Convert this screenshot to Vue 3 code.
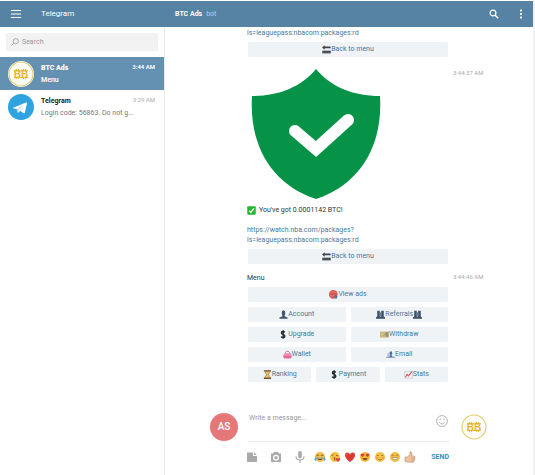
<script setup>
import { ref } from 'vue'

const query = ref('')
const draft = ref('')
const rewardLink = 'https://watch.nba.com/packages?ls=leaguepass:nbacom:packages:rd'

const menuRows = [
  [{ label: 'View ads', before: 'globe' }],
  [{ label: 'Account', before: 'person' }, { label: 'Referrals', before: 'people', after: 'people' }],
  [{ label: 'Upgrade', before: 'dollar' }, { label: 'Withdraw', before: 'cash' }],
  [{ label: 'Wallet', before: 'purse' }, { label: 'Email', before: 'mail' }],
  [
    { label: 'Ranking', before: 'hourglass' },
    { label: 'Payment', before: 'dollar' },
    { label: 'Stats', before: 'chart' }
  ]
]

const attachments = [
  { id: 'file', label: 'Attach file' },
  { id: 'camera', label: 'Send photo' },
  { id: 'mic', label: 'Record voice' }
]

const reactions = [
  { id: 'joy', label: 'Tears of joy' },
  { id: 'kiss', label: 'Kiss' },
  { id: 'heart', label: 'Heart' },
  { id: 'hearteyes', label: 'Heart eyes' },
  { id: 'blush', label: 'Blush' },
  { id: 'grin', label: 'Grin' },
  { id: 'thumb', label: 'Thumbs up' }
]
</script>

<template>
  <div class="app">
    <svg class="sprite" aria-hidden="true">
      <symbol id="coin" viewBox="0 0 26 26">
        <circle cx="13" cy="13" r="13" fill="#fff" />
        <circle cx="13" cy="13" r="12" fill="#fffefa" stroke="#e3cb6a" stroke-width="1.1" />
        <path d="M8.300 8v1.500M10.500 8v1.500M15.500 8v1.500M17.700 8v1.500M8.300 16.500v1.600M10.500 16.500v1.600M15.500 16.500v1.600M17.700 16.500v1.600M6 9.800h14M6 16.400h14" stroke="#e5b632" stroke-width="1" />
      </symbol>
      <symbol id="plane" viewBox="0 0 26 26">
        <circle cx="13" cy="13" r="13" fill="#2fa3e0" />
        <g transform="translate(1.300 2.800) scale(.84)">
          <path d="M4.500 13 20 6.800c.8-.3 1.300.2 1.100 1l-2.600 11.200c-.2.8-.8.9-1.400.5L13 16.600l-2 2.100c-.5.5-.9.300-1-.4L9 14.800l-4.400-1.300c-.5-.1-.5-.3-.1-.5z" fill="#fff" />
          <path d="m9 14.800 8.500-5.600-6.300 6.600-.5 2.700z" fill="#bcdcf0" />
        </g>
      </symbol>
      <symbol id="back" viewBox="0 0 10 10">
        <path d="M0 2.800 3 .2v1.500h6.500v2H3v1.600z" fill="#3b444a" />
        <path d="M.3 7.800h9.400" stroke="#3b444a" stroke-width="3" />
        <path d="M1.500 7.800h1M4 7.800h1M6.500 7.800h1" stroke="#9ba4a9" stroke-width=".8" />
      </symbol>
      <symbol id="check" viewBox="0 0 10 10">
        <rect x=".3" y=".3" width="9.400" height="9.400" rx="1" fill="#22b52f" />
        <path d="M2.500 5.300 4.300 7.200 7.700 2.600" fill="none" stroke="#fff" stroke-width="1.400" />
      </symbol>
      <symbol id="globe" viewBox="0 0 10 10">
        <circle cx="4.800" cy="4.900" r="4.800" fill="#d95550" />
        <path d="M1.500 3.200c2-1.700 4.500-1.700 6.500 0M1 6c2 1 4 1 6-.5" fill="none" stroke="#e88a78" stroke-width=".8" />
        <path d="m6.500 5 3 2-1 2.800-2.500-.8z" fill="#4277b5" />
      </symbol>
      <symbol id="person" viewBox="0 0 10 10">
        <ellipse cx="5" cy="3.300" rx="2" ry="2.900" fill="#42566e" />
        <path d="M3.700 5h2.600v2l3.200 1.200V9.700H.5V8.200L3.700 7z" fill="#42566e" />
      </symbol>
      <symbol id="people" viewBox="0 0 10 10">
        <path d="M1.400 .8h2.800v6.200l.8.8.8-.8V.8h2.800v6.400L10 8v1.700H0V8l1.400-.8z" fill="#3c5068" />
        <path d="M4.200 2.500h1.600v4.700H4.200z" fill="#6d7e91" />
      </symbol>
      <symbol id="dollar" viewBox="0 0 10 10">
        <path d="M6.500 2.700C5.300 1.200 2.700 1.400 2.700 3.200c0 2 3.800 1.500 3.800 3.700 0 2-3 2.100-4.200.5M4.600.3v9.400" fill="none" stroke="#22282c" stroke-width="1.500" />
      </symbol>
      <symbol id="cash" viewBox="0 0 10 10">
        <rect x=".2" y="1.800" width="9.600" height="6.500" fill="#bda66d" />
        <path d="M1 3.200h5M1 5h3M1 6.800h5" stroke="#e8d59c" stroke-width=".9" />
        <rect x="6.300" y="2.800" width="2.500" height="4.500" fill="#8b9580" />
      </symbol>
      <symbol id="purse" viewBox="0 0 10 10">
        <path d="M2.500 4C2.300.5 7.700.5 7.500 4" fill="none" stroke="#d65a8c" stroke-width="1" />
        <path d="M1.500 4h7C10 6 10.200 9 8 9.500H2C-.2 9 0 6 1.500 4z" fill="#e8679b" />
        <path d="M1 5.500h8" stroke="#f9c3d7" stroke-width=".8" />
      </symbol>
      <symbol id="mail" viewBox="0 0 10 10">
        <path d="M.5 8.500 2 3h2v5.500z" fill="#b6c6dc" />
        <ellipse cx="5.500" cy="3.500" rx="1.500" ry="2" fill="#4268a6" />
        <path d="M3.500 9c0-4.500 4-4.500 4 0z" fill="#4268a6" />
        <path d="M7.500 7.500H10V9H0V8" fill="#8ea7c8" />
      </symbol>
      <symbol id="hourglass" viewBox="0 0 10 10">
        <path d="M1 1h8M1 9.200h8" stroke="#6b4c25" stroke-width="1.500" />
        <path d="M2.200 1.700h5.600c0 2-1.800 2.500-1.800 3.400s1.800 1.400 1.800 3.400H2.200C2.200 6.500 4 6 4 5.100S2.200 3.700 2.200 1.700z" fill="#e4bd67" stroke="#96703b" stroke-width=".7" />
      </symbol>
      <symbol id="chart" viewBox="0 0 10 10">
        <path d="M.8 1.500v7.700h8.700V1.500z" fill="#eef0f1" stroke="#b9c1c8" stroke-width=".6" />
        <path d="m1.500 8 2-3 1.500 1.500 4-5" fill="none" stroke="#d65b60" stroke-width="1.300" />
      </symbol>
      <symbol id="file" viewBox="0 0 12 12">
        <path d="M1 1.500h6v3.500h4v6H1z" fill="#a9a9a9" />
        <path d="M8 1.200 10.800 4H8z" fill="#a9a9a9" />
      </symbol>
      <symbol id="camera" viewBox="0 0 12 12">
        <path fill-rule="evenodd" d="M4 1h4l1 1.500h2V11H1V2.500h2zM6 3.700a3 3 0 1 0 0 6 3 3 0 0 0 0-6zM6 5a1.700 1.700 0 1 1 0 3.400A1.700 1.700 0 0 1 6 5z" fill="#a9a9a9" />
      </symbol>
      <symbol id="mic" viewBox="0 0 12 12">
        <rect x="4.200" y="0" width="3.600" height="7.500" rx="1.800" fill="#a9a9a9" />
        <path d="M2 5.300c0 5 8 5 8 0M6 9v3" fill="none" stroke="#a9a9a9" stroke-width="1.100" />
      </symbol>
      <symbol id="joy" viewBox="0 0 12 12">
        <circle cx="6" cy="6" r="5" fill="#f3bf43" />
        <path d="M2.500 4.700 4 3.800l1 1M7 4.800l1-1 1.500.9" fill="none" stroke="#73501f" stroke-width=".9" />
        <path d="M3 6.300h6c0 4-6 4-6 0z" fill="#745126" />
        <path d="M3.300 6.500h5.400v.9H3.300z" fill="#fff" />
        <path d="M2.200 5.500C.5 7-.2 8.500 1 9.500s2.300-.5 1.200-4zM9.800 5.500c1.700 1.500 2.400 3 1.200 4s-2.300-.5-1.200-4z" fill="#5caed4" />
      </symbol>
      <symbol id="kiss" viewBox="0 0 12 12">
        <circle cx="6" cy="6" r="5" fill="#f5c23d" />
        <path d="m2.500 4.500 2-.8M7 4.200l2 .7M4.700 6.500c2 0 2 1 .5 1.200 1.500.2 1.200 1.300-.4 1.300" fill="none" stroke="#805721" stroke-width=".9" />
        <path d="M9 11C4.500 7.800 8 6 9 7.500c1-1.500 4.500.3 0 3.500z" fill="#dc4546" />
      </symbol>
      <symbol id="heart" viewBox="0 0 12 12">
        <path d="M6 11C-.5 6.800 0 1.500 3.200 1.500 4.700 1.500 5.600 2.500 6 3.400c.4-.9 1.300-1.900 2.800-1.900C12 1.500 12.500 6.800 6 11z" fill="#de3934" />
        <path d="M2 4.300c0-1 .8-1.600 1.500-1.600" fill="none" stroke="#f38b7e" stroke-width=".8" />
      </symbol>
      <symbol id="hearteyes" viewBox="0 0 12 12">
        <circle cx="6" cy="6" r="5" fill="#f3bb3d" />
        <path d="M3.500 6C-.2 3.500 2.500 1.800 3.500 3.200 4.500 1.800 7 3.500 3.500 6zM8.500 6C5 3.500 7.500 1.800 8.500 3.200 9.500 1.800 12.200 3.500 8.500 6z" fill="#d63e34" />
        <path d="M3.500 7h5c-.3 3-4.700 3-5 0z" fill="#835620" />
      </symbol>
      <symbol id="blush" viewBox="0 0 12 12">
        <circle cx="6" cy="6" r="5" fill="#f5c345" />
        <circle cx="2.700" cy="7" r="1.300" fill="#ef9a50" />
        <circle cx="9.300" cy="7" r="1.300" fill="#ef9a50" />
        <path d="M2.700 5c.5-1 1.500-1 2 0M7.300 5c.5-1 1.500-1 2 0M4 8c1 1.300 3 1.300 4 0" fill="none" stroke="#8c6026" stroke-width=".8" />
      </symbol>
      <symbol id="grin" viewBox="0 0 12 12">
        <circle cx="6" cy="6" r="5" fill="#f3c044" />
        <path d="M2.700 4.700c.5-1 1.500-1 2 0M7.300 4.700c.5-1 1.500-1 2 0" fill="none" stroke="#8c6026" stroke-width=".8" />
        <path d="M3.200 6.500h5.600c0 3-5.600 3-5.600 0z" fill="#fff" stroke="#9b702f" stroke-width=".6" />
      </symbol>
      <symbol id="thumb" viewBox="0 0 12 12">
        <path d="M1 6h2.500L6 3.300V.8C8 .5 8.200 2.500 7.700 5H10c1.300.2 1.200 1.500.5 1.700.8.5.6 1.500 0 1.700.4.700 0 1.300-.5 1.500.1.800-.4 1.300-1.200 1.300H4.500L1 10.500z" fill="#ecc3a2" stroke="#bd8a68" stroke-width=".6" />
        <path d="M7.500 6.800h2.700M7.500 8.500h2.600M7.300 10h2" stroke="#bd8a68" stroke-width=".5" />
      </symbol>
    </svg>

    <header class="topbar">
      <div class="brand">
        <button class="icon-button" type="button" aria-label="Open menu">
          <svg width="10" height="10" viewBox="0 0 10 10"><path d="M0 1.500h10M0 5h10M0 8.500h10" stroke="#fff" stroke-width="1.200" /></svg>
        </button>
        <span class="brand-name">Telegram</span>
      </div>
      <div class="peer"><b>BTC Ads</b><span class="peer-kind">bot</span></div>
      <button class="icon-button" type="button" aria-label="Search messages">
        <svg width="10" height="10" viewBox="0 0 10 10"><circle cx="4" cy="4" r="2.900" fill="none" stroke="#fff" stroke-width="1.200" /><path d="m6.200 6.200 3 3" stroke="#fff" stroke-width="1.400" /></svg>
      </button>
      <button class="icon-button more" type="button" aria-label="More">
        <svg width="4" height="10" viewBox="0 0 4 10"><path d="M1 .5h2v2H1zM1 4h2v2H1zM1 7.500h2v2H1z" fill="#e4edf4" /></svg>
      </button>
    </header>

    <div class="body">
      <aside class="sidebar">
        <label class="search">
          <svg width="8" height="8" viewBox="0 0 8 8"><circle cx="4.800" cy="3.200" r="2.600" fill="none" stroke="#999" stroke-width=".8" /><path d="M2.900 5.100.5 7.500" stroke="#999" stroke-width=".9" /></svg>
          <input v-model="query" type="search" placeholder="Search" aria-label="Search" />
        </label>
        <nav class="dialogs">
          <a class="dialog active" href="#btc-ads">
            <svg class="avatar" viewBox="0 0 26 26"><use href="#coin" /><text class="coin-text" x="13" y="17" text-anchor="middle">BB</text></svg>
            <span class="dialog-text">
              <span class="dialog-top"><b>BTC Ads</b><time>3:44 AM</time></span>
              <span class="preview">Menu</span>
            </span>
          </a>
          <a class="dialog" href="#telegram">
            <svg class="avatar"><use href="#plane" /></svg>
            <span class="dialog-text">
              <span class="dialog-top"><b>Telegram</b><time>3:29 AM</time></span>
              <span class="preview">Login code: 56863. Do not g...</span>
            </span>
          </a>
        </nav>
      </aside>

      <main class="chat">
        <section class="history">
          <article class="message">
            <div class="bubble">
              <a :href="rewardLink">https://watch.nba.com/packages?<br />ls=leaguepass:nbacom:packages:rd</a>
              <div class="keyboard">
                <button class="key" type="button"><svg><use href="#back" /></svg>Back to menu</button>
              </div>
            </div>
          </article>
          <article class="message reward">
            <div class="bubble">
              <svg class="shield" viewBox="0 0 130 130" role="img" aria-label="Shield with check mark">
                <path d="M65 0C50 18 28 27 1 27-2 76 20 115 65 130c45-15 67-54 64-103C102 27 80 18 65 0z" fill="#079347" />
                <path d="M44 62 65 80 97 51" fill="none" stroke="#fff" stroke-width="12" stroke-linecap="round" stroke-linejoin="miter" />
              </svg>
              <p class="reward-text"><svg class="mark"><use href="#check" /></svg>You've got 0.0001142 BTC!</p>
              <a :href="rewardLink">https://watch.nba.com/packages?<br />ls=leaguepass:nbacom:packages:rd</a>
              <div class="keyboard">
                <button class="key" type="button"><svg><use href="#back" /></svg>Back to menu</button>
              </div>
            </div>
            <time>3:44:37 AM</time>
          </article>
          <article class="message">
            <div class="bubble">
              <p>Menu</p>
              <div class="keyboard">
                <div v-for="(row, i) in menuRows" :key="i" class="key-row">
                  <button v-for="key in row" :key="key.label" class="key" type="button">
                    <svg><use :href="'#' + key.before" /></svg>{{ key.label }}<svg v-if="key.after"><use :href="'#' + key.after" /></svg>
                  </button>
                </div>
              </div>
            </div>
            <time>3:44:46 AM</time>
          </article>
        </section>

        <form class="composer" @submit.prevent>
          <span class="me">AS</span>
          <div class="editor">
            <div class="field">
              <textarea v-model="draft" rows="1" placeholder="Write a message..." aria-label="Write a message"></textarea>
              <button class="icon-button smile" type="button" aria-label="Emoji">
                <svg width="12" height="12" viewBox="0 0 12 12"><circle cx="6" cy="6" r="5.400" fill="none" stroke="#aaa" stroke-width=".9" /><path d="M3.300 7c1 2.500 4.400 2.500 5.400 0" fill="none" stroke="#aaa" stroke-width=".9" /><path d="M3.700 3.800h1.100v1.300H3.700zM7.200 3.800h1.100v1.300H7.200z" fill="#aaa" /></svg>
              </button>
            </div>
            <div class="tools">
              <div class="attach">
                <button v-for="item in attachments" :key="item.id" class="icon-button" type="button" :aria-label="item.label">
                  <svg width="12" height="12"><use :href="'#' + item.id" /></svg>
                </button>
              </div>
              <div class="reactions">
                <button v-for="item in reactions" :key="item.id" class="icon-button" type="button" :aria-label="item.label">
                  <svg width="12" height="12"><use :href="'#' + item.id" /></svg>
                </button>
              </div>
              <button class="send" type="submit">SEND</button>
            </div>
          </div>
          <svg class="avatar peer-avatar" viewBox="0 0 26 26"><use href="#coin" /><text class="coin-text" x="13" y="17" text-anchor="middle">BB</text></svg>
        </form>
      </main>
    </div>
  </div>
</template>

<style>
body {
  background: #fff;
}
</style>

<style scoped>
* {
  box-sizing: border-box;
}
.app {
  min-height: 100vh;
  display: flex;
  flex-direction: column;
  padding-top: 1px;
  border-right: 2px solid #eef2f5;
  font: 7px/10px Roboto, "Open Sans", sans-serif;
  color: #333;
}
.sprite {
  position: absolute;
  width: 0;
  height: 0;
}
svg {
  display: block;
  flex: none;
}
button,
input,
textarea {
  font: inherit;
  color: inherit;
  border: 0;
  margin: 0;
  padding: 0;
  background: none;
  outline: 0;
}
a {
  color: #4b7896;
  text-decoration: none;
}
p {
  margin: 0;
}
.icon-button {
  display: flex;
}
.topbar {
  position: relative;
  display: flex;
  align-items: center;
  height: 26px;
  background: #5682a3;
  color: #fff;
}
.brand {
  width: 165px;
  display: flex;
  align-items: center;
  gap: 20px;
  padding-left: 11px;
}
.brand-name {
  font-size: 8px;
}
.peer {
  flex: 1;
  display: flex;
  gap: 4px;
  padding-left: 10px;
}
.peer-kind {
  color: #b9cfe0;
}
.more {
  margin: 0 10px 0 20px;
}
.body {
  flex: 1;
  display: flex;
}
.sidebar {
  width: 165px;
  border-right: 1px solid #e8ebed;
}
.search {
  display: flex;
  align-items: center;
  gap: 3px;
  height: 18px;
  margin: 6px;
  padding: 0 5px;
  background: #f2f2f2;
  border-radius: 1px;
}
.search input {
  flex: 1;
  min-width: 0;
}
input::placeholder,
textarea::placeholder {
  color: #999;
  opacity: 1;
}
.dialog {
  display: flex;
  align-items: center;
  gap: 7px;
  height: 33px;
  padding: 0 9px 0 8px;
  color: #777;
}
.avatar {
  width: 26px;
  height: 26px;
}
.coin-text {
  font: 700 10px "Liberation Sans", sans-serif;
  fill: #e5b632;
}
.dialog-text {
  flex: 1;
  display: flex;
  flex-direction: column;
  gap: 2px;
}
.dialog-top {
  display: flex;
  justify-content: space-between;
}
.dialog b {
  color: #222;
}
.dialog time {
  font-size: 6px;
  line-height: 8px;
  color: #aaa;
}
.dialog.active {
  background: #6490b1;
  font-weight: 600;
}
.dialog.active,
.dialog.active b,
.dialog.active time {
  color: #fff;
}
.chat {
  flex: 1;
  min-width: 0;
  padding: 0 43px 0 45px;
  overflow: hidden;
}
.history {
  display: flex;
  flex-direction: column;
  gap: 9px;
  margin-top: -9px;
  padding-left: 37px;
}
.message {
  display: grid;
  grid-template-columns: 1fr 37px;
  column-gap: 5px;
}
.reward {
  padding-top: 3px;
}
.message > time {
  font-size: 6px;
  line-height: 8px;
  color: #aaa;
  white-space: nowrap;
}
.bubble {
  min-width: 0;
}
.shield {
  width: 130px;
  height: 130px;
  margin-left: 4px;
}
.reward-text {
  display: flex;
  align-items: center;
  gap: 3px;
  padding: 6px 0 10px;
}
.mark {
  width: 9px;
  height: 9px;
}
.keyboard {
  display: flex;
  flex-direction: column;
  gap: 5px;
  padding: 4px 0 0 1px;
}
.key-row {
  display: flex;
  gap: 5px;
}
.key {
  flex: 1 1 0;
  display: flex;
  align-items: center;
  justify-content: center;
  height: 15px;
  line-height: 15px;
  border-radius: 1px;
  background: #eff3f6;
  color: #4b7896;
}
.keyboard > .key {
  flex: none;
}
.key svg {
  width: 9px;
  height: 9px;
}
.composer {
  display: grid;
  grid-template-columns: 28px 1fr 31px;
  column-gap: 10px;
  padding-top: 31px;
}
.me {
  display: grid;
  place-items: center;
  width: 28px;
  height: 28px;
  border-radius: 50%;
  background: #e57779;
  color: #fff;
  font-size: 10px;
  font-weight: 500;
}
.field {
  display: flex;
  align-items: flex-start;
  height: 29px;
  border-bottom: 1px solid #e8e8e8;
}
.field textarea {
  flex: 1;
  min-width: 0;
  height: 20px;
  padding-left: 1px;
  resize: none;
}
.smile {
  padding: 2px 1px 0 0;
}
.tools {
  display: flex;
  align-items: center;
  gap: 8px;
  margin-left: -2px;
  padding-top: 9px;
}
.attach {
  display: flex;
  gap: 12px;
}
.reactions {
  display: flex;
  gap: 3px;
}
.send {
  margin-left: auto;
  color: #3a8dbb;
  font-weight: 700;
}
.peer-avatar {
  margin: 1px 0 0 2px;
}
</style>
